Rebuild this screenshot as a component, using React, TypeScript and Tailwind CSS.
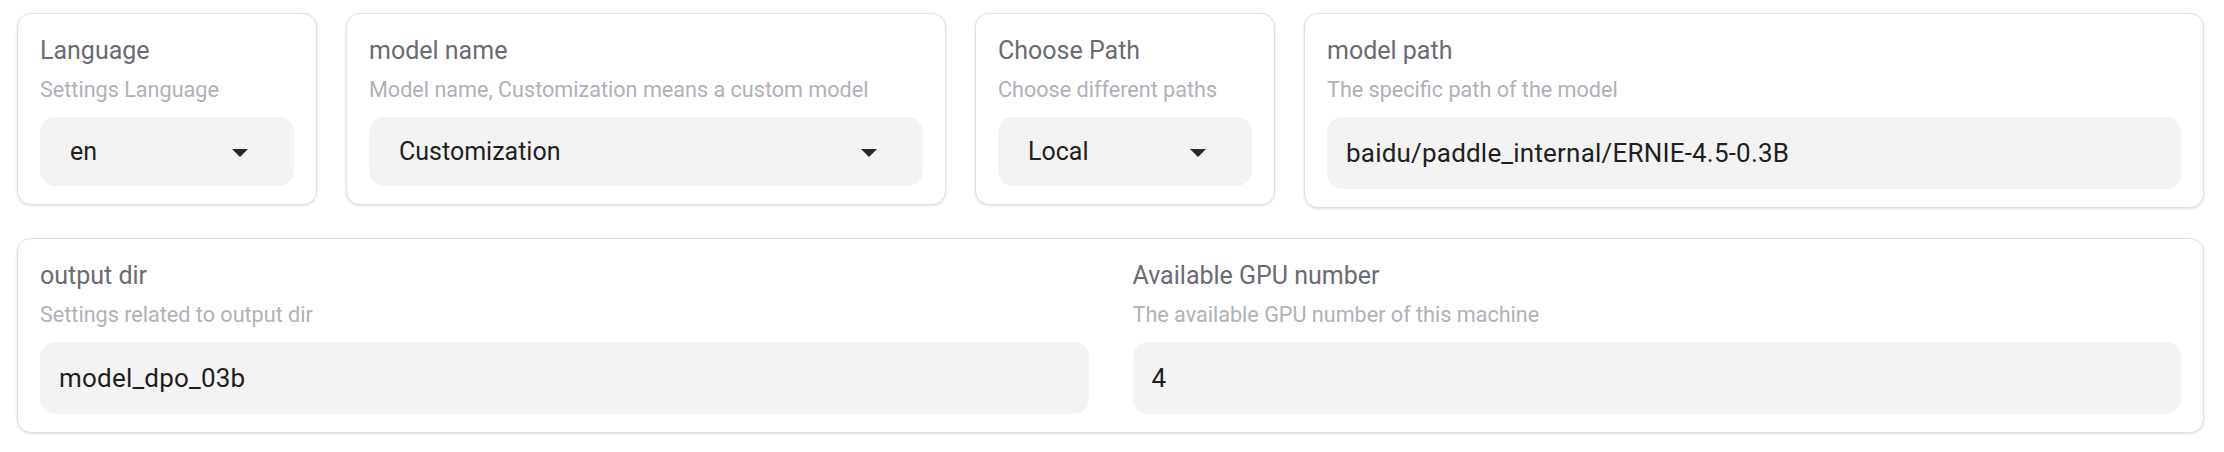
import { ReactNode } from "react";

const font = { fontFamily: "Roboto, 'Liberation Sans', sans-serif" };

function Card({
  title,
  info,
  children,
}: {
  title: string;
  info: string;
  children: ReactNode;
}) {
  return (
    <div className="min-w-0 rounded-[14px] border border-[#e1e1e4] bg-white px-[22px] pt-[21px] pb-[18px] shadow-[0_1px_3px_rgba(0,0,0,0.12)]">
      <Field title={title} info={info}>
        {children}
      </Field>
    </div>
  );
}

function Field({
  title,
  info,
  children,
}: {
  title: string;
  info: string;
  children: ReactNode;
}) {
  return (
    <div className="min-w-0">
      <div className="text-[25px] leading-[32px] text-[#6b6b73]">{title}</div>
      <div className="mt-[9px] truncate text-[21.6px] leading-[28px] text-[#b1b1b8]">
        {info}
      </div>
      <div className="mt-[13px]">{children}</div>
    </div>
  );
}

function Dropdown({ value }: { value: string }) {
  return (
    <div className="flex h-[69px] items-center justify-between rounded-[15px] bg-[#f3f3f4] pl-[30px] pr-[46px]">
      <span className="text-[25px] text-[#1f1f22]">{value}</span>
      <svg width="16" height="8" viewBox="0 0 16 8" className="mt-[3px]">
        <path d="M0 0 L16 0 L8 8 Z" fill="#27272a" />
      </svg>
    </div>
  );
}

function TextBox({ value }: { value: string }) {
  return (
    <div className="flex h-[72px] items-center rounded-[15px] bg-[#f3f3f4] px-[19px]">
      <span className="truncate text-[26px] tracking-[0.2px] text-[#1f1f22]">{value}</span>
    </div>
  );
}

export default function App() {
  return (
    <div className="min-h-screen bg-white pl-[17px] pr-[20px] pt-[13px]" style={font}>
      <div className="grid grid-cols-[1fr_2fr_1fr_3fr] items-start gap-[29px]">
        <Card title="Language" info="Settings Language">
          <Dropdown value="en" />
        </Card>
        <Card title="model name" info="Model name, Customization means a custom model">
          <Dropdown value="Customization" />
        </Card>
        <Card title="Choose Path" info="Choose different paths">
          <Dropdown value="Local" />
        </Card>
        <Card title="model path" info="The specific path of the model">
          <TextBox value="baidu/paddle_internal/ERNIE-4.5-0.3B" />
        </Card>
      </div>

      <div className="mt-[30px] grid grid-cols-2 gap-[44px] rounded-[14px] border border-[#e1e1e4] bg-white px-[22px] pt-[21px] pb-[18px] shadow-[0_1px_3px_rgba(0,0,0,0.12)]">
        <Field title="output dir" info="Settings related to output dir">
          <TextBox value="model_dpo_03b" />
        </Field>
        <Field title="Available GPU number" info="The available GPU number of this machine">
          <TextBox value="4" />
        </Field>
      </div>
    </div>
  );
}
